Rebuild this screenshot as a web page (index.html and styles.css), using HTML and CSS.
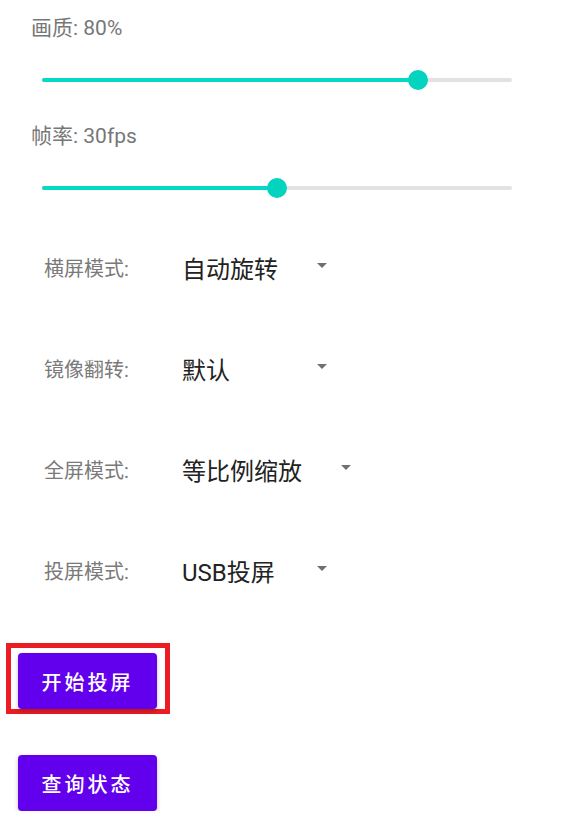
FILE: index.html
```html
<!DOCTYPE html>
<html lang="zh-CN">

<head>
    <meta charset="UTF-8">
    <meta name="viewport" content="width=device-width, initial-scale=1.0">
    <title>投屏设置</title>
    <link rel="stylesheet" href="styles.css">
</head>

<body>

    <div class="panel">
        <p class="sliderLabel">画质: 80%</p>
        <div class="slider">
            <div class="track"></div>
            <div class="fill" style="width: 80%"></div>
            <div class="thumb" style="left: 80%"></div>
        </div>

        <p class="sliderLabel second">帧率: 30fps</p>
        <div class="slider">
            <div class="track"></div>
            <div class="fill" style="width: 50%"></div>
            <div class="thumb" style="left: 50%"></div>
        </div>

        <div class="option first">
            <span class="optionLabel">横屏模式:</span>
            <div class="spinner">
                <span class="value">自动旋转</span>
                <span class="arrow"></span>
            </div>
        </div>

        <div class="option">
            <span class="optionLabel">镜像翻转:</span>
            <div class="spinner">
                <span class="value">默认</span>
                <span class="arrow"></span>
            </div>
        </div>

        <div class="option">
            <span class="optionLabel">全屏模式:</span>
            <div class="spinner">
                <span class="value">等比例缩放</span>
                <span class="arrow"></span>
            </div>
        </div>

        <div class="option">
            <span class="optionLabel">投屏模式:</span>
            <div class="spinner">
                <span class="value">USB投屏</span>
                <span class="arrow"></span>
            </div>
        </div>

        <div class="highlight">
            <button class="btn">开始投屏</button>
        </div>

        <button class="btn query">查询状态</button>
    </div>

</body>

</html>
```

FILE: styles.css
```css
body {
    margin: 0;
    padding: 0;
    background-color: #fff;
    font-family: Roboto, "Noto Sans CJK SC", sans-serif;
}

.panel {
    display: flex;
    flex-direction: column;
    align-items: flex-start;
    padding-top: 16px;
}

.sliderLabel {
    margin: 0 0 0 31px;
    font-size: 21px;
    line-height: 24px;
    color: #777;
}

.sliderLabel.second {
    margin-top: 34px;
}

.slider {
    position: relative;
    width: 470px;
    height: 20px;
    margin: 30px 0 0 42px;
}

.track,
.fill {
    position: absolute;
    left: 0;
    top: 8px;
    height: 4px;
    border-radius: 2px;
}

.track {
    width: 100%;
    background-color: #e2e2e2;
}

.fill {
    background-color: #03dac5;
}

.thumb {
    position: absolute;
    top: 0;
    width: 20px;
    height: 20px;
    margin-left: -10px;
    border-radius: 50%;
    background-color: #03d3bf;
}

.option {
    display: flex;
    align-items: center;
    height: 40px;
    margin: 61px 0 0 44px;
}

.option.first {
    margin-top: 49px;
}

.optionLabel {
    width: 138px;
    font-size: 20px;
    color: #7a7a7a;
}

.spinner {
    display: flex;
    align-items: center;
}

.value {
    min-width: 96px;
    padding-right: 39px;
    font-size: 24px;
    color: #222;
}

.arrow {
    width: 0;
    height: 0;
    margin-top: -4px;
    border-left: 5px solid transparent;
    border-right: 5px solid transparent;
    border-top: 5px solid #707070;
}

.highlight {
    margin: 53px 0 0 6px;
    padding: 5px 8px 0 7px;
    border: 5px solid #ec1c24;
}

.btn {
    display: block;
    width: 139px;
    height: 56px;
    padding: 0;
    border: none;
    border-radius: 4px;
    background-color: #6200ee;
    color: #fff;
    font-family: Roboto, "Noto Sans CJK SC", sans-serif;
    font-size: 20px;
    font-weight: 500;
    letter-spacing: 3px;
    box-shadow: 0 2px 4px rgba(0, 0, 0, 0.25);
}

.query {
    margin: 41px 0 0 18px;
}
```
